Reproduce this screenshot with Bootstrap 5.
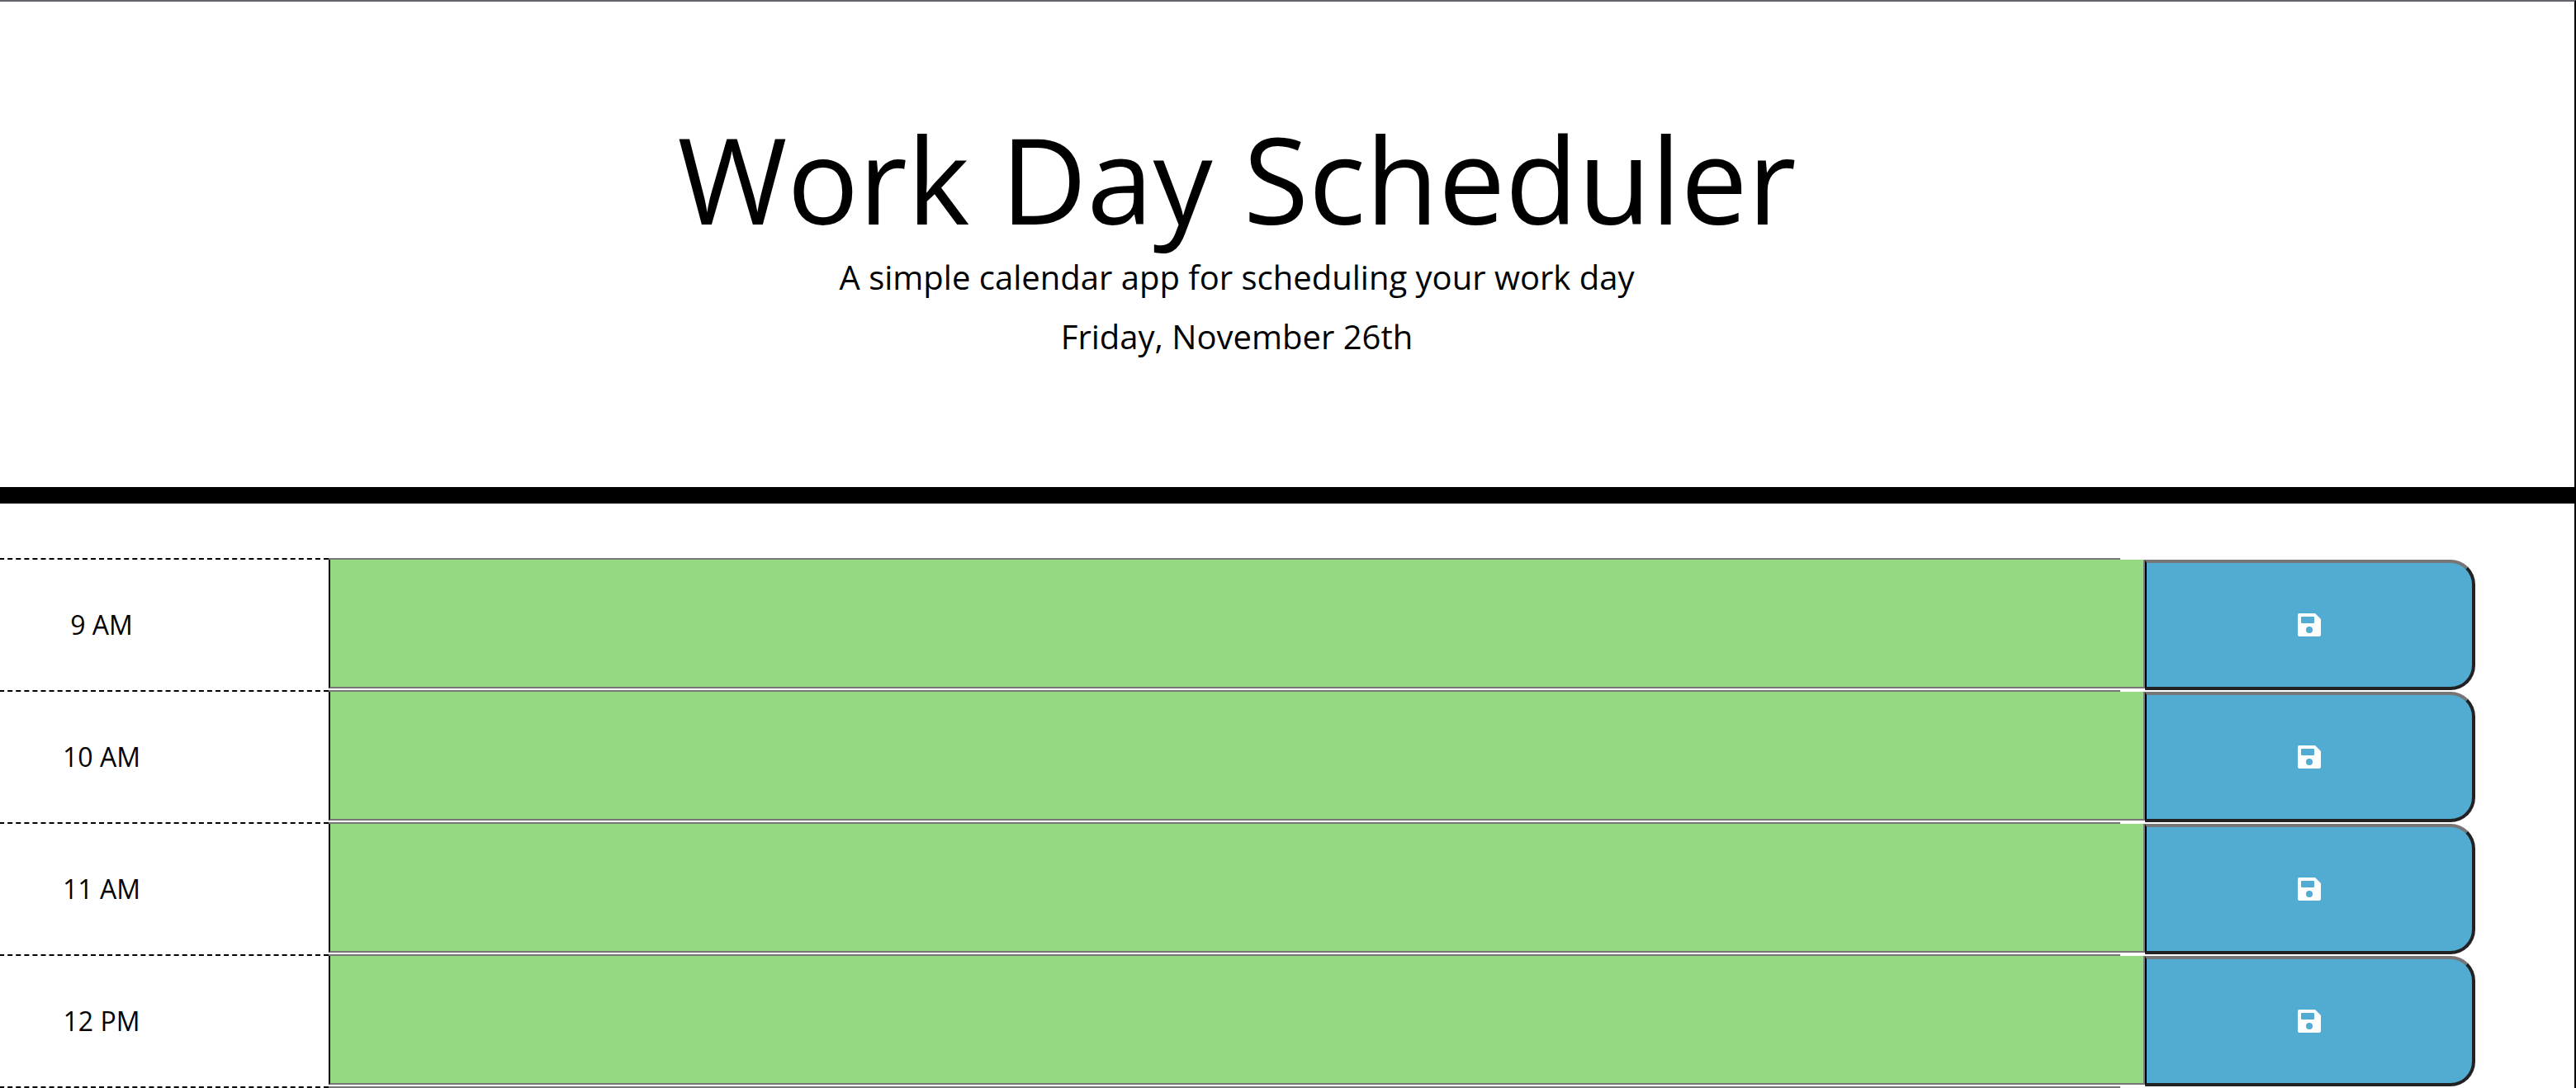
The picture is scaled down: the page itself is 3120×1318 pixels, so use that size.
<!DOCTYPE html>
<html lang="en">
<head>
<meta charset="utf-8">
<meta name="viewport" content="width=device-width, initial-scale=1">
<title>Work Day Scheduler</title>
<link href="https://cdn.jsdelivr.net/npm/bootstrap@5.3.0/dist/css/bootstrap.min.css" rel="stylesheet">
<style>
  body { font-family: "Open Sans", sans-serif; color: #000; background: #fff; font-size: 32px; line-height: 48px; }
  .page-frame { border-top: 2px solid #67636a; border-right: 2px solid #000; overflow: hidden; }
  .masthead { padding: 124px 122px 140px 0; border-bottom: 20px solid #000; }
  .masthead h1 { font-size: 144px; line-height: 180px; font-weight: 400; margin: 0; }
  .masthead p { font-size: 40px; line-height: 60px; margin: 0 0 12px; }
  .planner { padding: 66px 120px 0 0; }
  .slot { min-height: 160px; }
  .slot-end { min-height: 0; }
  .slot-hour { flex: 0 0 550px; margin-left: -152px; border-top: 2px dashed #000; }
  .slot-task { border-top: 2px solid #767676; margin-right: 30px; }
  .slot-task textarea { width: calc(100% + 30px); flex: none; margin-bottom: 2px; padding: 4px; resize: none; border: 2px solid #767676; border-top: 0; border-left-color: #000; border-radius: 0; background: #94da84; color: #000; outline: 0; }
  .slot-save { flex: 0 0 400px; margin-top: 2px; padding: 0; color: #fff; background: #52abd1; border: 4px solid #222; border-top-color: #767676; border-left: 2px solid #000; border-radius: 0 30px 30px 0; }
  .slot-save:hover { background: #3f9bc4; }
  .slot-blank { flex: 0 0 400px; }
</style>
<script src="https://cdn.jsdelivr.net/npm/bootstrap@5.3.0/dist/js/bootstrap.bundle.min.js"></script>
</head>
<body>
<svg class="d-none" aria-hidden="true">
  <symbol id="disk" viewBox="0 0 28 28">
    <path fill="currentColor" fill-rule="evenodd" d="M2 0H21L28 7V26Q28 28 26 28H2Q0 28 0 26V2Q0 0 2 0ZM5 4Q4 4 4 5V11Q4 12 5 12H19Q20 12 20 11V5Q20 4 19 4ZM14 16A4 4 0 1 0 14 24A4 4 0 1 0 14 16Z"/>
  </symbol>
</svg>
<div class="page-frame">
  <header class="masthead text-center">
    <h1>Work Day Scheduler</h1>
    <p>A simple calendar app for scheduling your work day</p>
    <p>Friday, November 26th</p>
  </header>
  <main class="planner">
    <div class="slot d-flex">
      <label class="slot-hour d-flex align-items-center justify-content-center" for="task-9">9 AM</label>
      <div class="slot-task flex-grow-1 d-flex"><textarea id="task-9"></textarea></div>
      <button class="slot-save d-flex align-items-center justify-content-center" type="button" aria-label="Save"><svg width="28" height="28"><use href="#disk"/></svg></button>
    </div>
    <div class="slot d-flex">
      <label class="slot-hour d-flex align-items-center justify-content-center" for="task-10">10 AM</label>
      <div class="slot-task flex-grow-1 d-flex"><textarea id="task-10"></textarea></div>
      <button class="slot-save d-flex align-items-center justify-content-center" type="button" aria-label="Save"><svg width="28" height="28"><use href="#disk"/></svg></button>
    </div>
    <div class="slot d-flex">
      <label class="slot-hour d-flex align-items-center justify-content-center" for="task-11">11 AM</label>
      <div class="slot-task flex-grow-1 d-flex"><textarea id="task-11"></textarea></div>
      <button class="slot-save d-flex align-items-center justify-content-center" type="button" aria-label="Save"><svg width="28" height="28"><use href="#disk"/></svg></button>
    </div>
    <div class="slot d-flex">
      <label class="slot-hour d-flex align-items-center justify-content-center" for="task-12">12 PM</label>
      <div class="slot-task flex-grow-1 d-flex"><textarea id="task-12"></textarea></div>
      <button class="slot-save d-flex align-items-center justify-content-center" type="button" aria-label="Save"><svg width="28" height="28"><use href="#disk"/></svg></button>
    </div>
    <div class="slot-end d-flex">
      <div class="slot-hour"></div>
      <div class="slot-task flex-grow-1"></div>
      <div class="slot-blank"></div>
    </div>
  </main>
</div>
</body>
</html>
